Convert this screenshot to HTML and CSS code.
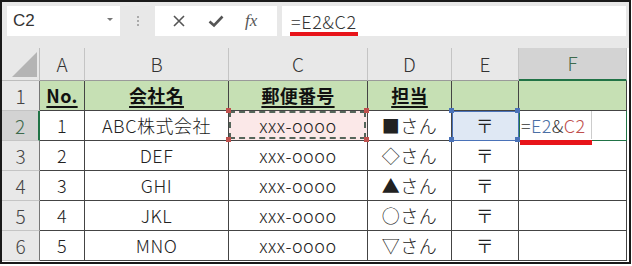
FILE: index.html
```html
<!DOCTYPE html>
<html lang="ja">
<head>
<meta charset="utf-8">
<link rel="stylesheet" href="styles.css">
</head>
<body>
<div class="frame">
  <div class="fbar">
    <div class="namebox"><span class="ref">C2</span><span class="caret"></span></div>
    <div class="dots"><i></i><i></i><i></i></div>
    <div class="btns">
      <svg class="ic" width="16" height="16" viewBox="0 0 16 16"><path d="M3 3 L13 13 M13 3 L3 13" stroke="#555" stroke-width="1.6" fill="none"/></svg>
      <svg class="ic" width="18" height="16" viewBox="0 0 18 16"><path d="M2.5 8.5 L7 12.5 L15.5 3.5" stroke="#555" stroke-width="2.6" fill="none"/></svg>
      <span class="fx">fx</span>
    </div>
    <div class="formula"><span class="ftext">=E2&amp;C2</span></div>
  </div>
  <div class="sheet">
    <div class="corner"><span class="tri"></span></div>
    <div class="ch">A</div><div class="ch">B</div><div class="ch">C</div><div class="ch">D</div><div class="ch">E</div><div class="ch sel">F</div>

    <div class="rh">1</div>
    <div class="c hd"><u>No.</u></div><div class="c hd"><u>会社名</u></div><div class="c hd"><u>郵便番号</u></div><div class="c hd"><u>担当</u></div><div class="c hd"></div><div class="c hd"></div>

    <div class="rh sel">2</div>
    <div class="c">1</div><div class="c">ABC株式会社</div>
    <div class="c copy">xxx-oooo<span class="h tl"></span><span class="h tr"></span><span class="h bl"></span><span class="h br"></span></div>
    <div class="c">■さん</div>
    <div class="c ref2">〒<span class="h tl"></span><span class="h tr"></span><span class="h bl"></span><span class="h br"></span></div>
    <div class="c edit"><span class="ebox"><span class="k">=</span><span class="b">E2</span><span class="k">&amp;</span><span class="r">C2</span></span><span class="mark"></span></div>

    <div class="rh">3</div>
    <div class="c">2</div><div class="c">DEF</div><div class="c">xxx-oooo</div><div class="c">◇さん</div><div class="c">〒</div><div class="c"></div>

    <div class="rh">4</div>
    <div class="c">3</div><div class="c">GHI</div><div class="c">xxx-oooo</div><div class="c">▲さん</div><div class="c">〒</div><div class="c"></div>

    <div class="rh">5</div>
    <div class="c">4</div><div class="c">JKL</div><div class="c">xxx-oooo</div><div class="c">○さん</div><div class="c">〒</div><div class="c"></div>

    <div class="rh">6</div>
    <div class="c">5</div><div class="c">MNO</div><div class="c">xxx-oooo</div><div class="c">▽さん</div><div class="c">〒</div><div class="c"></div>
  </div>
</div>
</body>
</html>
```
FILE: styles.css
```css
* { box-sizing: border-box; }
html, body { margin: 0; padding: 0; background: #fff; }
body { font-family: "Noto Sans CJK JP", "Noto Sans", sans-serif; color: #222; font-weight: 300; }

.frame {
  width: 631px;
  height: 264px;
  border: 2px solid #1a1a1a;
  background: #fff;
  overflow: hidden;
}

.fbar {
  height: 46px;
  background: #e8e8e8;
  display: flex;
  align-items: flex-start;
  padding: 4px 0 0 5px;
}
.namebox {
  width: 113px;
  height: 30px;
  background: #fff;
  display: flex;
  align-items: center;
  justify-content: space-between;
  padding: 0 7px 0 6px;
}
.ref { font-size: 17px; color: #333; font-family: "Liberation Sans", sans-serif; font-weight: 400; }
.caret {
  width: 0; height: 0;
  border-left: 3px solid transparent;
  border-right: 3px solid transparent;
  border-top: 3px solid #777;
  margin-top: -4px;
}
.dots {
  width: 35px;
  height: 30px;
  display: flex;
  flex-direction: column;
  align-items: center;
  justify-content: center;
  gap: 2px;
}
.dots i { display: block; width: 2px; height: 2px; background: #aaa; }
.btns {
  width: 122px;
  height: 30px;
  background: #fff;
  display: flex;
  align-items: center;
  padding-left: 16px;
  gap: 20px;
}
.fx {
  font-family: "Liberation Serif", serif;
  font-style: italic;
  font-weight: 400;
  font-size: 17px;
  color: #555;
}
.formula {
  margin-left: 5px;
  width: 344px;
  height: 30px;
  background: #fff;
  padding-left: 8px;
  display: flex;
  align-items: center;
}
.ftext {
  font-size: 18px;
  letter-spacing: 0.6px;
  color: #333;
  border-bottom: 4px solid #e8141a;
  line-height: 20px;
  padding: 0 1px 1px 1px;
  margin-top: 4px;
}

.sheet {
  display: grid;
  grid-template-columns: 38px 45px 144px 139px 84px 67px 108px;
  grid-template-rows: 33px repeat(6, 30px);
}
.corner {
  background: #e8e8e8;
  border-right: 1px solid #bdbdbd;
  border-bottom: 1px solid #bdbdbd;
  position: relative;
}
.tri {
  position: absolute;
  right: 2px;
  bottom: 3px;
  width: 0; height: 0;
  border-left: 25px solid transparent;
  border-bottom: 25px solid #b4b4b4;
}
.ch {
  background: #e8e8e8;
  border-right: 1px solid #c4c4c4;
  border-bottom: 1px solid #9a9a9a;
  display: flex;
  align-items: center;
  justify-content: center;
  font-size: 19px;
  color: #333;
  padding-bottom: 2px;
}
.ch.sel {
  background: #d3d3d3;
  color: #3d6a4c;
  border-bottom: 2px solid #217346;
}
.rh {
  background: #e8e8e8;
  border-right: 1px solid #777;
  border-bottom: 1px solid #c4c4c4;
  display: flex;
  align-items: center;
  justify-content: center;
  font-size: 19px;
  color: #444;
  padding-bottom: 1px;
}
.rh.sel {
  background: #d3d3d3;
  border-right: 2px solid #217346;
  color: #3d6a4c;
}
.c {
  border-right: 1px solid #444;
  border-bottom: 1px solid #444;
  display: flex;
  align-items: center;
  justify-content: center;
  font-size: 18px;
  letter-spacing: 0.5px;
  color: #222;
  position: relative;
  padding-bottom: 1px;
}
.c.hd {
  background: #c6e0b4;
  font-weight: 700;
  letter-spacing: 0.3px;
  color: #111;
}
.c.hd u { text-underline-offset: 3px; text-decoration-thickness: 1.5px; }
.c.copy { background: #fbe8e8; }
.c.copy::after {
  content: "";
  position: absolute;
  inset: 0 1px 1px 0;
  border: 2px dashed #55655a;
}
.c.ref2 {
  background: #dfe8f4;
  outline: 1px solid #4a72b8;
  outline-offset: -1px;
}
.h {
  position: absolute;
  width: 5px; height: 5px;
  z-index: 2;
}
.copy .h { background: #c0504d; }
.ref2 .h { background: #4a72b8; }
.h.tl { left: -3px; top: -3px; }
.h.tr { right: -2px; top: -3px; }
.h.bl { left: -3px; bottom: -2px; }
.h.br { right: -2px; bottom: -2px; }

.c.edit {
  justify-content: flex-start;
  border: 1px solid #217346;
  border-top: none;
}
.ebox {
  height: 100%;
  width: 72px;
  display: flex;
  align-items: center;
  padding-left: 1px;
  border-right: 1px solid #ccc;
  font-size: 18px;
  letter-spacing: 0.4px;
}
.k { color: #333; }
.b { color: #4a6fa5; }
.r { color: #c0504d; }
.mark {
  position: absolute;
  left: 0;
  top: 29px;
  width: 72px;
  height: 5px;
  background: #e8141a;
  z-index: 3;
}
```
